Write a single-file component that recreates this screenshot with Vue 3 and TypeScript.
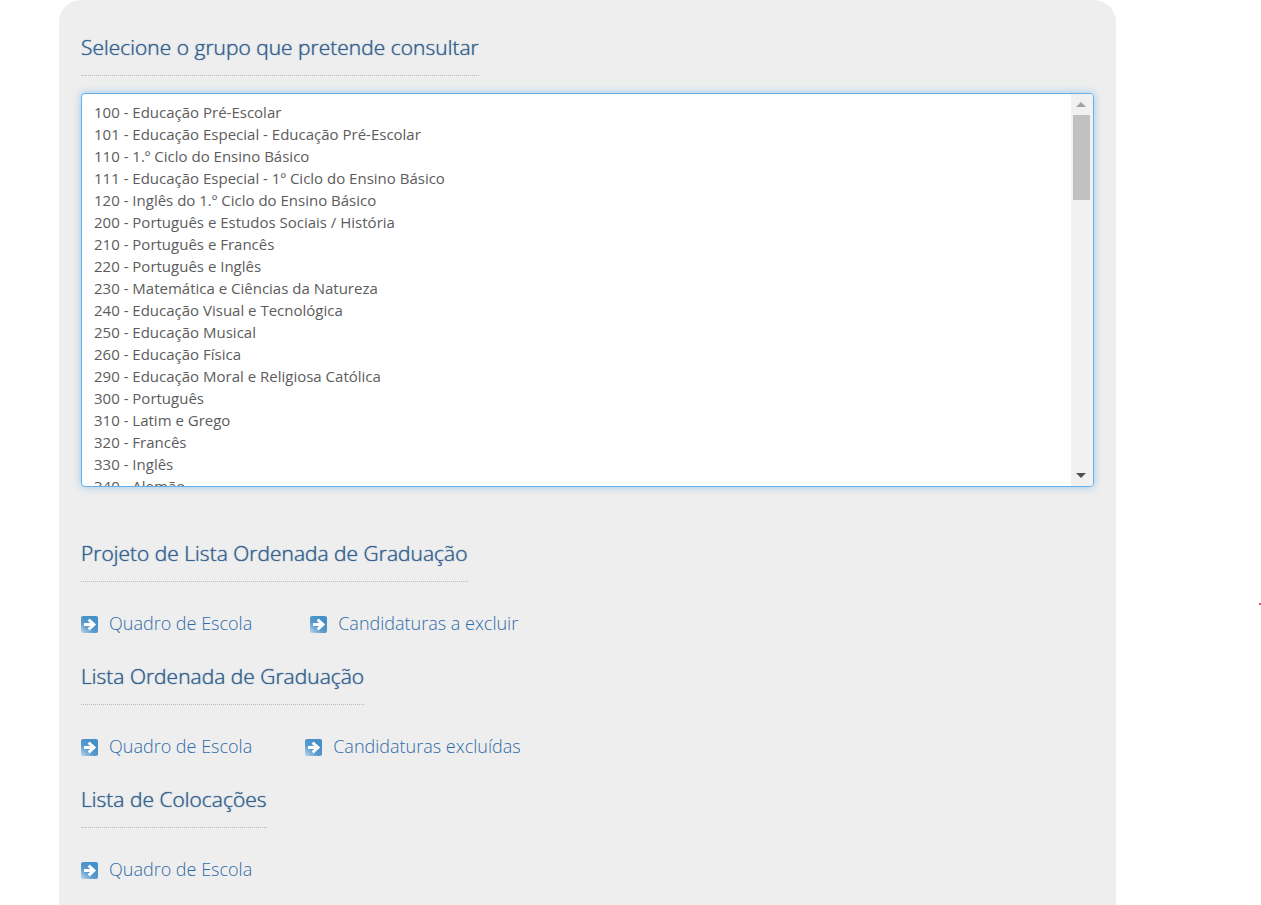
<script setup lang="ts">
import { computed, onMounted, ref } from 'vue'

interface Section {
  title: string
  links: string[]
  wide?: boolean
}

const named: string[] = [
  '100 - Educação Pré-Escolar',
  '101 - Educação Especial - Educação Pré-Escolar',
  '110 - 1.º Ciclo do Ensino Básico',
  '111 - Educação Especial - 1º Ciclo do Ensino Básico',
  '120 - Inglês do 1.º Ciclo do Ensino Básico',
  '200 - Português e Estudos Sociais / História',
  '210 - Português e Francês',
  '220 - Português e Inglês',
  '230 - Matemática e Ciências da Natureza',
  '240 - Educação Visual e Tecnológica',
  '250 - Educação Musical',
  '260 - Educação Física',
  '290 - Educação Moral e Religiosa Católica',
  '300 - Português',
  '310 - Latim e Grego',
  '320 - Francês',
  '330 - Inglês',
  '340 - Alemão',
  '350 - Espanhol',
  '400 - História',
  '410 - Filosofia',
  '420 - Geografia',
  '430 - Economia e Contabilidade',
  '500 - Matemática',
  '510 - Física e Química',
  '520 - Biologia e Geologia',
  '530 - Educação Tecnológica',
  '540 - Eletrotecnia',
  '550 - Informática',
  '560 - Ciências Agropecuárias',
  '600 - Artes Visuais',
  '610 - Música',
  '620 - Educação Física',
  '910 - Educação Especial 1',
  '920 - Educação Especial 2',
  '930 - Educação Especial 3',
]
const music = Array.from({ length: 37 }, (_, i) => `M${String(i + 1).padStart(2, '0')} - Música`)
const groups = [...named, ...music]
const selected = ref<string[]>([])

const sections: Section[] = [
  { title: 'Projeto de Lista Ordenada de Graduação', links: ['Quadro de Escola', 'Candidaturas a excluir'], wide: true },
  { title: 'Lista Ordenada de Graduação', links: ['Quadro de Escola', 'Candidaturas excluídas'] },
  { title: 'Lista de Colocações', links: ['Quadro de Escola'] },
]

const list = ref<HTMLSelectElement | null>(null)
const scroll = ref({ top: 0, view: 1, full: 4 })

function measure() {
  const el = list.value
  if (el) scroll.value = { top: el.scrollTop, view: el.clientHeight, full: el.scrollHeight }
}
function step(rows: number) {
  list.value?.scrollBy({ top: rows * 22 })
}
const thumb = computed(() => ({
  top: `${(scroll.value.top / scroll.value.full) * 100}%`,
  height: `${(scroll.value.view / scroll.value.full) * 100}%`,
}))
onMounted(measure)
</script>

<template>
  <main class="panel">
    <h2><label for="grupo">Selecione o grupo que pretende consultar</label></h2>
    <div class="frame">
      <select id="grupo" ref="list" v-model="selected" class="groups" multiple @scroll="measure">
        <option v-for="group in groups" :key="group" :value="group">{{ group }}</option>
      </select>
      <div class="bar">
        <button type="button" class="up" aria-label="Subir" @click="step(-2)">
          <svg viewBox="0 0 10 5" aria-hidden="true"><path d="M0 5L5 0L10 5Z" /></svg>
        </button>
        <div class="track"><div class="thumb" :style="thumb"></div></div>
        <button type="button" aria-label="Descer" @click="step(2)">
          <svg viewBox="0 0 10 5" aria-hidden="true"><path d="M0 0L5 5L10 0Z" /></svg>
        </button>
      </div>
    </div>

    <section v-for="section in sections" :key="section.title">
      <h2>{{ section.title }}</h2>
      <nav class="links" :class="{ wide: section.wide }" :aria-label="section.title">
        <a v-for="link in section.links" :key="link" href="#">
          <svg class="arrow" viewBox="0 0 17 17" aria-hidden="true">
            <defs>
              <linearGradient id="tile" x1="0" y1="1" x2="0.7" y2="0.2">
                <stop offset="0" stop-color="#c4d9ea" />
                <stop offset="0.5" stop-color="#5a9bcd" />
                <stop offset="1" stop-color="#4490c8" />
              </linearGradient>
            </defs>
            <rect width="17" height="17" rx="2" fill="url(#tile)" />
            <path d="M3 8.5H13M7.6 3.6L13 8.5L7.6 13.4" fill="none" stroke="#fff" stroke-width="2.9" />
          </svg>
          <span>{{ link }}</span>
        </a>
      </nav>
    </section>
    <span class="dot"></span>
  </main>
</template>

<style>
body {
  background: #fff;
}
</style>

<style scoped>
.panel {
  box-sizing: border-box;
  min-height: 100vh;
  margin: 0 145px 0 59px;
  padding: 28px 22px 12px;
  border-radius: 22px 22px 0 0;
  background: #eee;
  font-family: "Open Sans", "Noto Sans", sans-serif;
  font-weight: 300;
}

h2 {
  display: table;
  margin: 0;
  padding-bottom: 8px;
  border-bottom: 1px dotted #bbb;
  color: #36618f;
  font-size: 21px;
  font-weight: 300;
  line-height: 39px;
  text-shadow: 0 0 1px #36618f;
}

.frame {
  display: flex;
  box-sizing: border-box;
  height: 394px;
  margin: 17px 0 47px;
  border: 1px solid #66afe9;
  border-radius: 4px;
  background: #fff;
  box-shadow: 0 0 8px rgba(102, 175, 233, 0.6);
  overflow: hidden;
}

.groups {
  flex: 1;
  min-width: 0;
  height: 100%;
  padding: 8px 0 0 12px;
  border: 0;
  outline: 0;
  background: transparent;
  color: #5c5c5c;
  font: inherit;
  font-size: 15px;
  scrollbar-width: none;
}

.groups option {
  min-height: 22px;
  padding: 0;
  line-height: 22px;
}

.bar {
  display: flex;
  flex-direction: column;
  width: 22px;
  background: #f1f1f1;
}

.bar button {
  display: flex;
  align-items: center;
  height: 21px;
  padding: 0 0 0 5px;
  border: 0;
  background: none;
  fill: #505050;
}

.bar button.up {
  fill: #a3a3a3;
}

.bar svg {
  width: 10px;
  height: 5px;
}

.track {
  position: relative;
  flex: 1;
}

.thumb {
  position: absolute;
  right: 3px;
  left: 2px;
  background: #c1c1c1;
}

.links {
  display: flex;
  flex-wrap: wrap;
  gap: 53px;
  padding: 27px 0 20px;
}

.links.wide {
  gap: 58px;
}

.links a {
  display: flex;
  align-items: center;
  gap: 11px;
  color: #2f6ba8;
  font-size: 18px;
  line-height: 28px;
  text-decoration: none;
}

.arrow {
  flex: none;
  width: 17px;
  height: 17px;
  margin-top: 2px;
}

.dot {
  position: absolute;
  top: 603px;
  right: 0;
  width: 2px;
  height: 2px;
  background: #e8506a;
}
</style>
